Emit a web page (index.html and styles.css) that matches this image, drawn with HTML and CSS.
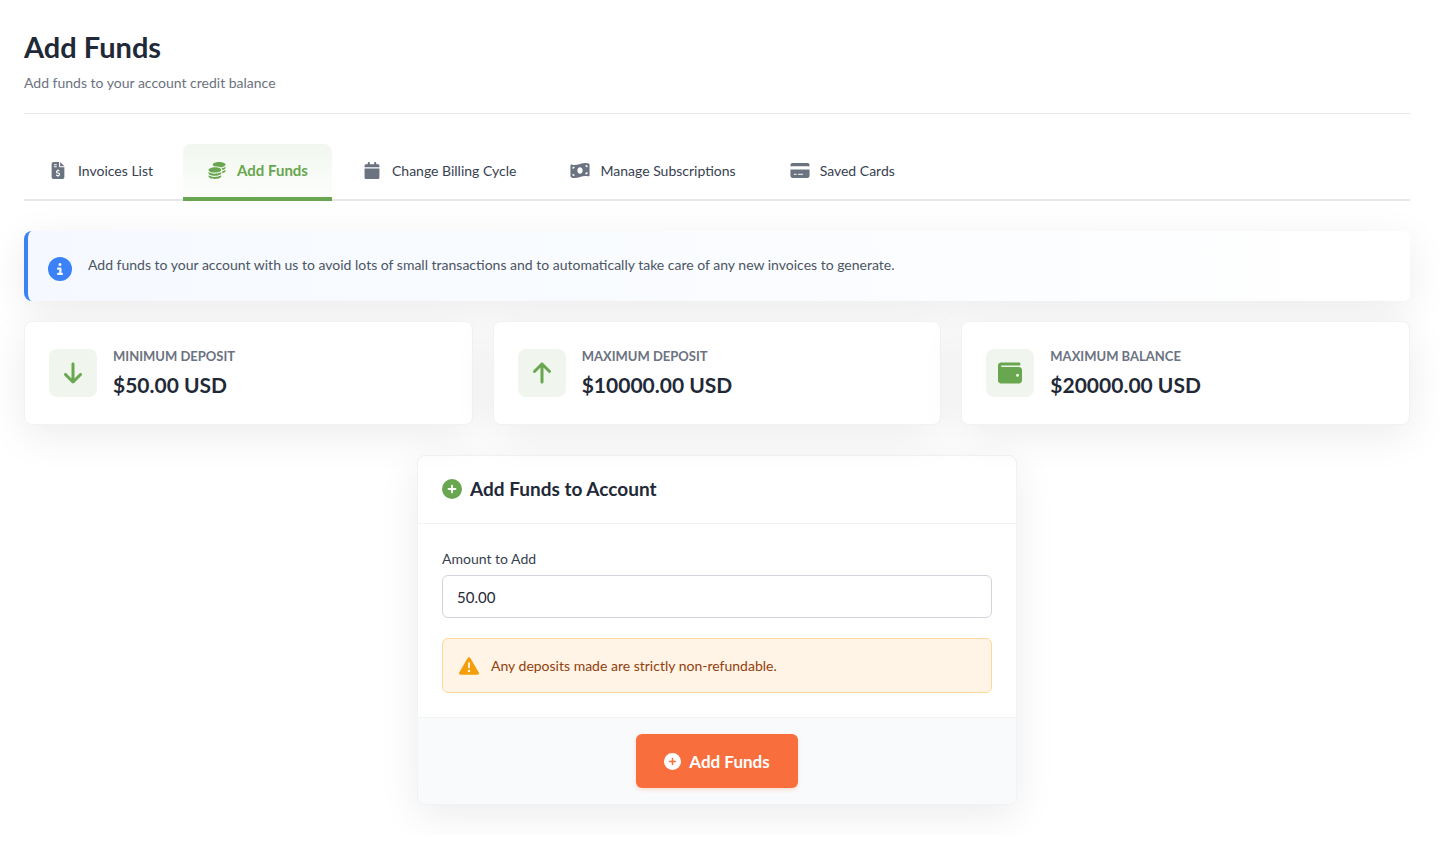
FILE: index.html
```
<!DOCTYPE html>
<html lang="en">
<head>
    <meta charset="UTF-8">
    <meta name="viewport" content="width=device-width, initial-scale=1.0">
    <title>Add Funds</title>
    <link rel="stylesheet" href="styles.css">
</head>
<body>
    <main class="page">
        <header class="page-header">
            <h1>Add Funds</h1>
            <p>Add funds to your account credit balance</p>
        </header>

        <nav class="tabs">
            <a href="#invoices" class="tab">
                <svg class="tab-icon" viewBox="0 0 384 512"><path d="M64 0C28.7 0 0 28.7 0 64V448c0 35.3 28.7 64 64 64H320c35.3 0 64-28.7 64-64V160H256c-17.7 0-32-14.3-32-32V0H64zM256 0V128H384L256 0zM64 80c0-8.8 7.2-16 16-16h64c8.8 0 16 7.2 16 16s-7.2 16-16 16H80c-8.8 0-16-7.2-16-16zm0 64c0-8.8 7.2-16 16-16h64c8.8 0 16 7.2 16 16s-7.2 16-16 16H80c-8.8 0-16-7.2-16-16zm128 72c8.8 0 16 7.2 16 16v17.3c8.5 1.2 16.7 3.1 24.1 5.1c8.5 2.3 13.6 11 11.3 19.6s-11 13.6-19.6 11.3c-11.1-3-22-5.2-32.1-5.3c-8.4-.1-17.4 1.8-23.6 5.5c-5.7 3.4-8.1 7.3-8.1 12.8c0 3.7 1.3 6.5 7.3 10.1c6.9 4.1 16.6 7.1 29.2 10.9l.5 .1c11.3 3.4 25.3 7.6 36.3 14.6c12.1 7.6 22.4 19.7 22.7 38.2c.3 19.3-9.6 33.3-22.9 41.6c-7.7 4.8-16.4 7.6-25.1 9.1V440c0 8.8-7.2 16-16 16s-16-7.2-16-16V422.2c-11.2-2.1-21.7-5.7-30.9-8.9c-2.1-.7-4.2-1.4-6.2-2.1c-8.4-2.8-12.9-11.9-10.1-20.2s11.9-12.9 20.2-10.1c2.5 .8 4.8 1.6 7.1 2.4c13.6 4.6 24.6 8.4 36.3 8.7c9.1 .3 17.9-1.7 23.7-5.3c5.1-3.2 7.9-7.3 7.8-14c-.1-4.6-1.8-7.8-7.7-11.6c-6.8-4.3-16.5-7.4-29-11.2l-1.6-.5c-11-3.3-24.3-7.3-34.8-13.7c-12-7.2-22.6-18.9-22.7-37.3c-.1-19.4 10.8-32.8 23.8-40.5c7.5-4.4 15.8-7.2 24.1-8.7V232c0-8.8 7.2-16 16-16z"/></svg>
                <span>Invoices List</span>
            </a>
            <a href="#add-funds" class="tab active">
                <svg class="tab-icon" viewBox="0 0 512 512"><path d="M512 80c0 18-14.3 34.6-38.4 48c-29.1 16.1-72.5 27.5-122.3 30.9c-3.7-1.8-7.4-3.5-11.3-5C300.6 137.4 248.2 128 192 128c-8.3 0-16.4 .2-24.5 .6l-1.1-.6C142.3 114.6 128 98 128 80c0-44.2 86-80 192-80S512 35.8 512 80zM160.7 161.1c10.2-.7 20.7-1.1 31.3-1.1c62.2 0 117.4 12.3 152.5 31.4C369.3 204.9 384 221.7 384 240c0 4-.7 7.9-2.1 11.7c-4.6 13.2-17 25.3-35 35.5c-.1 .1-.3 .1-.4 .2c-.3 .2-.6 .3-.9 .5c-35 19.4-90.8 32-153.6 32c-59.6 0-112.9-11.3-148.2-29.1c-1.9-.9-3.7-1.9-5.5-2.9C14.3 274.6 0 258 0 240c0-34.8 53.4-64.5 128-75.4c10.5-1.5 21.4-2.7 32.7-3.5zM416 240c0-21.9-10.6-39.9-24.1-53.4c28.3-4.4 54.2-11.4 76.2-20.5c16.3-6.8 31.5-15.2 43.9-25.5V176c0 19.3-16.5 37.1-43.8 50.9c-14.6 7.4-32.4 13.7-52.4 18.5c.1-1.8 .2-3.5 .2-5.3zm-32 96c0 18-14.3 34.6-38.4 48c-1.8 1-3.6 1.9-5.5 2.9C304.9 404.7 251.6 416 192 416c-62.8 0-118.6-12.6-153.6-32C14.3 370.6 0 354 0 336V300.6c12.5 10.3 27.6 18.7 43.9 25.5C83.4 342.6 135.8 352 192 352s108.6-9.4 148.1-25.9c7.8-3.2 15.3-6.9 22.4-10.9c6.1-3.4 11.8-7.2 17.2-11.2c1.5-1.1 2.9-2.3 4.3-3.4V336zm32 0V278.1c19-4.2 36.5-9.5 52.1-16c16.3-6.8 31.5-15.2 43.9-25.5V272c0 10.5-5 21-14.9 30.9c-16.3 16.3-45 29.7-81.3 38.4c.1-1.7 .2-3.5 .2-5.3zM192 448c56.2 0 108.6-9.4 148.1-25.9c16.3-6.8 31.5-15.2 43.9-25.5V432c0 44.2-86 80-192 80S0 476.2 0 432V396.6c12.5 10.3 27.6 18.7 43.9 25.5C83.4 438.6 135.8 448 192 448z"/></svg>
                <span>Add Funds</span>
            </a>
            <a href="#billing-cycle" class="tab">
                <svg class="tab-icon" viewBox="0 0 448 512"><path d="M96 32V64H48C21.5 64 0 85.5 0 112v48H448V112c0-26.5-21.5-48-48-48H352V32c0-17.7-14.3-32-32-32s-32 14.3-32 32V64H160V32c0-17.7-14.3-32-32-32S96 14.3 96 32zM448 192H0V464c0 26.5 21.5 48 48 48H400c26.5 0 48-21.5 48-48V192z"/></svg>
                <span>Change Billing Cycle</span>
            </a>
            <a href="#subscriptions" class="tab">
                <svg class="tab-icon" viewBox="0 0 576 512"><path d="M0 112.5V422.3c0 18 10.1 35 27 41.3c87 32.5 174 10.3 261-11.9c79.8-20.3 159.6-40.7 239.3-18.9c23 6.3 48.7-9.5 48.7-33.4V89.7c0-18-10.1-35-27-41.3C462 15.9 375 38.1 288 60.3C208.2 80.6 128.4 100.9 48.7 79.1C25.6 72.8 0 88.6 0 112.5zM288 352c-44.2 0-80-43-80-96s35.8-96 80-96s80 43 80 96s-35.8 96-80 96zM64 352c35.3 0 64 28.7 64 64H64V352zm64-208c0 35.3-28.7 64-64 64V144h64zM512 304v64H448c0-35.3 28.7-64 64-64zM448 96h64v64c-35.3 0-64-28.7-64-64z"/></svg>
                <span>Manage Subscriptions</span>
            </a>
            <a href="#cards" class="tab">
                <svg class="tab-icon" viewBox="0 0 576 512"><path d="M64 32C28.7 32 0 60.7 0 96v32H576V96c0-35.3-28.7-64-64-64H64zM576 224H0V416c0 35.3 28.7 64 64 64H512c35.3 0 64-28.7 64-64V224zM112 352h64c8.8 0 16 7.2 16 16s-7.2 16-16 16H112c-8.8 0-16-7.2-16-16s7.2-16 16-16zm112 16c0-8.8 7.2-16 16-16H368c8.8 0 16 7.2 16 16s-7.2 16-16 16H240c-8.8 0-16-7.2-16-16z"/></svg>
                <span>Saved Cards</span>
            </a>
        </nav>

        <div class="info-banner">
            <svg class="info-icon" viewBox="0 0 512 512"><path d="M256 512A256 256 0 1 0 256 0a256 256 0 1 0 0 512zM216 336h24V272H216c-13.3 0-24-10.7-24-24s10.7-24 24-24h48c13.3 0 24 10.7 24 24v88h8c13.3 0 24 10.7 24 24s-10.7 24-24 24H216c-13.3 0-24-10.7-24-24s10.7-24 24-24zm40-208a32 32 0 1 1 0 64 32 32 0 1 1 0-64z"/></svg>
            <p>Add funds to your account with us to avoid lots of small transactions and to automatically take care of any new invoices to generate.</p>
        </div>

        <section class="limits">
            <div class="limit-card">
                <div class="limit-icon">
                    <svg viewBox="0 0 384 512"><path d="M169.4 470.6c12.5 12.5 32.8 12.5 45.3 0l160-160c12.5-12.5 12.5-32.8 0-45.3s-32.8-12.5-45.3 0L224 370.8V64c0-17.7-14.3-32-32-32s-32 14.3-32 32V370.7L54.6 265.4c-12.5-12.5-32.8-12.5-45.3 0s-12.5 32.8 0 45.3l160 160z"/></svg>
                </div>
                <div>
                    <div class="limit-label">Minimum Deposit</div>
                    <div class="limit-value">$50.00 USD</div>
                </div>
            </div>
            <div class="limit-card">
                <div class="limit-icon">
                    <svg viewBox="0 0 384 512"><path d="M214.6 41.4c-12.5-12.5-32.8-12.5-45.3 0l-160 160c-12.5 12.5-12.5 32.8 0 45.3s32.8 12.5 45.3 0L160 141.2V448c0 17.7 14.3 32 32 32s32-14.3 32-32V141.2L329.4 246.6c12.5 12.5 32.8 12.5 45.3 0s12.5-32.8 0-45.3l-160-160z"/></svg>
                </div>
                <div>
                    <div class="limit-label">Maximum Deposit</div>
                    <div class="limit-value">$10000.00 USD</div>
                </div>
            </div>
            <div class="limit-card">
                <div class="limit-icon">
                    <svg viewBox="0 0 512 512"><path d="M64 32C28.7 32 0 60.7 0 96V416c0 35.3 28.7 64 64 64H448c35.3 0 64-28.7 64-64V192c0-35.3-28.7-64-64-64H80c-8.8 0-16-7.2-16-16s7.2-16 16-16H448c17.7 0 32-14.3 32-32s-14.3-32-32-32H64zM416 272a32 32 0 1 1 0 64 32 32 0 1 1 0-64z"/></svg>
                </div>
                <div>
                    <div class="limit-label">Maximum Balance</div>
                    <div class="limit-value">$20000.00 USD</div>
                </div>
            </div>
        </section>

        <form class="funds-form" action="#">
            <div class="form-header">
                <svg viewBox="0 0 512 512"><path d="M256 512A256 256 0 1 0 256 0a256 256 0 1 0 0 512zM232 344V280H168c-13.3 0-24-10.7-24-24s10.7-24 24-24h64V168c0-13.3 10.7-24 24-24s24 10.7 24 24v64h64c13.3 0 24 10.7 24 24s-10.7 24-24 24H280v64c0 13.3-10.7 24-24 24s-24-10.7-24-24z"/></svg>
                <h2>Add Funds to Account</h2>
            </div>
            <div class="form-body">
                <label for="amount">Amount to Add</label>
                <input type="text" id="amount" name="amount" value="50.00">
                <div class="warning">
                    <svg viewBox="0 0 512 512"><path d="M256 32c14.2 0 27.3 7.5 34.5 19.8l216 368c7.3 12.4 7.3 27.7 .2 40.1S486.3 480 472 480H40c-14.3 0-27.6-7.7-34.7-20.1s-7-27.8 .2-40.1l216-368C228.7 39.5 241.8 32 256 32zm0 128c-13.3 0-24 10.7-24 24V296c0 13.3 10.7 24 24 24s24-10.7 24-24V184c0-13.3-10.7-24-24-24zm32 224a32 32 0 1 0 -64 0 32 32 0 1 0 64 0z"/></svg>
                    <span>Any deposits made are strictly non-refundable.</span>
                </div>
            </div>
            <div class="form-footer">
                <button type="submit">
                    <svg viewBox="0 0 512 512"><path d="M256 512A256 256 0 1 0 256 0a256 256 0 1 0 0 512zM232 344V280H168c-13.3 0-24-10.7-24-24s10.7-24 24-24h64V168c0-13.3 10.7-24 24-24s24 10.7 24 24v64h64c13.3 0 24 10.7 24 24s-10.7 24-24 24H280v64c0 13.3-10.7 24-24 24s-24-10.7-24-24z"/></svg>
                    Add Funds
                </button>
            </div>
        </form>
    </main>
</body>
</html>
```
FILE: styles.css
```
:root {
    --green: #68a64f;
    --orange: #f86e3c;
    --blue: #3b82f6;
    --amber: #f59e0b;
    --dark: #1f2937;
    --text: #374151;
    --muted: #6b7280;
    --border: #e5e7eb;
    --border-light: #f1f2f4;
    --shadow: 0 10px 40px rgba(0, 0, 0, 0.08);
}

* {
    box-sizing: border-box;
    margin: 0;
    padding: 0;
}

body {
    font-family: Lato, "Open Sans", sans-serif;
    font-size: 14px;
    line-height: 21px;
    color: var(--text);
    background-color: white;
}

svg {
    display: block;
    flex-shrink: 0;
    fill: currentColor;
}

.page {
    padding: 28px 30px 30px 24px;
}

.page-header {
    padding-bottom: 20px;
    margin-bottom: 30px;
    border-bottom: 1px solid var(--border);
}

.page-header h1 {
    font-size: 29px;
    line-height: 38px;
    font-weight: 700;
    color: var(--dark);
    margin-bottom: 6px;
}

.page-header p {
    color: var(--muted);
}

.tabs {
    display: flex;
    gap: 6px;
    border-bottom: 2px solid var(--border);
    margin-bottom: 30px;
}

.tab {
    display: flex;
    align-items: center;
    gap: 10px;
    height: 57px;
    padding: 0 24px 4px;
    margin-bottom: -2px;
    border-radius: 8px 8px 0 0;
    color: var(--text);
    text-decoration: none;
}

.tab-icon {
    width: 20px;
    height: 17px;
    color: var(--muted);
}

.tab.active {
    font-size: 15px;
    font-weight: 700;
    color: var(--green);
    background: linear-gradient(to bottom, #f1f7ef, #fdfefd);
    box-shadow: inset 0 -4px 0 var(--green);
}

.tab.active .tab-icon {
    color: var(--green);
}

.info-banner {
    display: flex;
    align-items: flex-start;
    gap: 16px;
    padding: 20px;
    margin-bottom: 20px;
    border-left: 4px solid var(--blue);
    border-radius: 8px;
    background: linear-gradient(to right, #f5f9ff, white);
    box-shadow: var(--shadow);
}

.info-icon {
    width: 24px;
    height: 24px;
    margin-top: 6px;
    color: var(--blue);
}

.info-banner p {
    line-height: 28px;
    color: #4b5563;
}

.limits {
    display: grid;
    grid-template-columns: repeat(3, 1fr);
    gap: 20px;
    margin-bottom: 30px;
}

.limit-card {
    display: flex;
    align-items: center;
    gap: 16px;
    padding: 24px;
    background-color: white;
    border: 1px solid var(--border-light);
    border-radius: 8px;
    box-shadow: var(--shadow);
}

.limit-icon {
    display: flex;
    align-items: center;
    justify-content: center;
    width: 48px;
    height: 48px;
    border-radius: 8px;
    background-color: #f0f6ed;
    color: var(--green);
}

.limit-icon svg {
    height: 24px;
}

.limit-label {
    font-size: 13px;
    line-height: 20px;
    font-weight: 700;
    color: var(--muted);
    text-transform: uppercase;
    margin-bottom: 4px;
}

.limit-value {
    font-size: 21px;
    line-height: 30px;
    font-weight: 700;
    color: var(--dark);
}

.funds-form {
    max-width: 600px;
    margin: 0 auto;
    background-color: white;
    border: 1px solid var(--border-light);
    border-radius: 8px;
    box-shadow: var(--shadow);
    overflow: hidden;
}

.form-header {
    display: flex;
    align-items: center;
    gap: 8px;
    padding: 19px 24px 21px;
    border-bottom: 1px solid var(--border-light);
}

.form-header svg {
    width: 20px;
    height: 20px;
    color: var(--green);
}

.form-header h2 {
    font-size: 19px;
    line-height: 27px;
    font-weight: 700;
    color: var(--dark);
}

.form-body {
    padding: 24px;
}

.form-body label {
    display: block;
    margin-bottom: 6px;
}

.form-body input {
    display: block;
    width: 100%;
    height: 43px;
    padding: 0 14px;
    margin-bottom: 20px;
    border: 1px solid #d1d5db;
    border-radius: 6px;
    font-family: inherit;
    font-size: 15px;
    color: var(--dark);
}

.warning {
    display: flex;
    align-items: center;
    gap: 12px;
    padding: 16px;
    border: 1px solid #fcd99a;
    border-radius: 6px;
    background-color: #fff4e5;
    color: #92400e;
}

.warning svg {
    width: 20px;
    height: 20px;
    color: var(--amber);
}

.form-footer {
    display: flex;
    justify-content: center;
    padding: 16px 24px;
    border-top: 1px solid var(--border-light);
    background-color: #f9fafb;
}

button {
    display: flex;
    align-items: center;
    gap: 8px;
    height: 54px;
    padding: 0 28px;
    border: none;
    border-radius: 6px;
    background-color: var(--orange);
    box-shadow: 0 2px 4px rgba(248, 110, 60, 0.2);
    color: white;
    font-family: inherit;
    font-size: 17px;
    font-weight: 700;
    cursor: pointer;
}

button svg {
    width: 17px;
    height: 17px;
}
```
